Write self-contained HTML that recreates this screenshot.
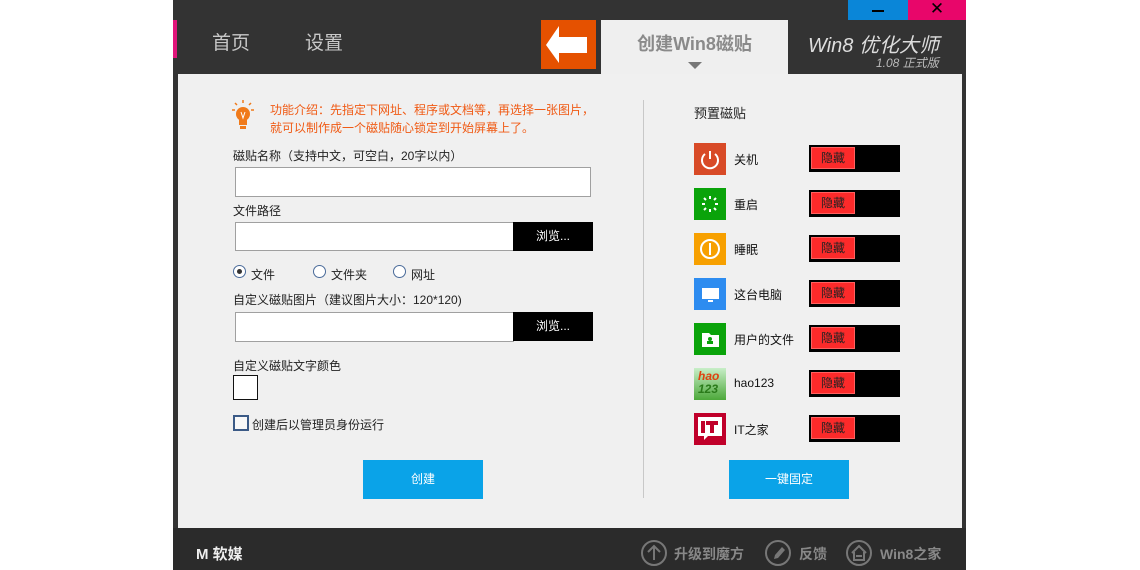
<!DOCTYPE html>
<html><head><meta charset="utf-8"><style>
*{margin:0;padding:0;box-sizing:border-box}
body{width:1140px;height:570px;background:#fff;position:relative;overflow:hidden;font-family:"Liberation Sans","Microsoft YaHei","Noto Sans CJK SC",sans-serif;font-size:12px;color:#222}
.a{position:absolute}
.inp{position:absolute;background:#fff;border:1px solid #a0a0a0}
.br{position:absolute;background:#000;color:#fff;font-size:12px;text-align:center;line-height:29px;width:80px;height:29px}
.rad{position:absolute;width:13px;height:13px;border:1px solid #4a6b9a;border-radius:50%;background:#fff}
.ic{position:absolute;left:694px;width:32px;height:32px}
.lb{position:absolute;left:734px;font-size:12px;color:#111}
.tg{position:absolute;left:809px;width:91px;height:27px;background:#000}
.tg span{position:absolute;left:2px;top:2px;width:44px;height:22px;background:#fc2a2a;border:1px solid #ff6060;color:#222;text-align:center;line-height:20px;font-size:12px}
.btn{position:absolute;background:#0aa3e8;color:#fff;text-align:center;width:120px;height:39px;line-height:39px;top:460px}
</style></head><body>
<div class="a" style="left:173px;top:0;width:793px;height:570px;background:#333"></div>
<div class="a" style="left:173px;top:20px;width:4px;height:38px;background:#e0157a"></div>
<div class="a" style="left:848px;top:0;width:60px;height:20px;background:#0a86d8"><div class="a" style="left:24px;top:10px;width:12px;height:2px;background:#000"></div></div>
<div class="a" style="left:908px;top:0;width:58px;height:20px;background:#e8066a;color:#000;text-align:center;font-size:17px;line-height:18px">✕</div>
<div class="a" style="left:212px;top:28px;font-size:19px;color:#c8c8c8">首页</div>
<div class="a" style="left:305px;top:28px;font-size:19px;color:#c8c8c8">设置</div>
<div class="a" style="left:541px;top:20px;width:55px;height:49px;background:#e55100">
<svg width="55" height="49" viewBox="0 0 55 49"><path d="M5 25 L18 6 L18 17 L46 17 L46 33 L18 33 L18 43 Z" fill="#fff"/></svg></div>
<div class="a" style="left:601px;top:20px;width:187px;height:54px;background:#efefef;text-align:center">
<div style="margin-top:10px;font-size:18px;color:#8a8a8a;font-weight:bold">创建Win8磁贴</div>
<div class="a" style="left:87px;top:42px;width:0;height:0;border-left:7px solid transparent;border-right:7px solid transparent;border-top:7px solid #777"></div></div>
<div class="a" style="left:808px;top:29px;font-size:20px;color:#ddd;font-style:italic">Win8 优化大师</div>
<div class="a" style="left:876px;top:54px;font-size:12px;color:#bbb;font-style:italic">1.08 正式版</div>
<div class="a" style="left:178px;top:74px;width:784px;height:454px;background:#f0f0f0"></div>
<svg class="a" style="left:231px;top:99px" width="24" height="34" viewBox="0 0 24 34"><g stroke="#f07a1a" stroke-width="1.5"><path d="M12 1v3M4 4l2 2M20 4l-2 2M1 11h3M23 11h-3"/></g><circle cx="12" cy="15" r="7" fill="#f07a1a"/><rect x="8" y="20" width="8" height="6" fill="#f07a1a"/><path d="M10 13l2 6 2-6" stroke="#fff" fill="none"/><rect x="9" y="27" width="6" height="3" fill="#f07a1a"/></svg>
<div class="a" style="left:270px;top:101px;color:#f05a14;font-size:12px;line-height:18px">功能介绍：先指定下网址、程序或文档等，再选择一张图片，<br>就可以制作成一个磁贴随心锁定到开始屏幕上了。</div>
<div class="a" style="left:233px;top:147px">磁贴名称（支持中文，可空白，20字以内）</div>
<div class="inp" style="left:235px;top:167px;width:356px;height:30px"></div>
<div class="a" style="left:233px;top:202px">文件路径</div>
<div class="inp" style="left:235px;top:222px;width:279px;height:29px"></div>
<div class="br" style="left:513px;top:222px">浏览...</div>
<div class="rad" style="left:233px;top:265px"><div class="a" style="left:3px;top:3px;width:5px;height:5px;border-radius:50%;background:#333"></div></div>
<div class="a" style="left:251px;top:266px">文件</div>
<div class="rad" style="left:313px;top:265px"></div><div class="a" style="left:331px;top:266px">文件夹</div>
<div class="rad" style="left:393px;top:265px"></div><div class="a" style="left:411px;top:266px">网址</div>
<div class="a" style="left:233px;top:291px">自定义磁贴图片（建议图片大小：120*120)</div>
<div class="inp" style="left:235px;top:312px;width:279px;height:30px"></div>
<div class="br" style="left:513px;top:312px">浏览...</div>
<div class="a" style="left:233px;top:357px">自定义磁贴文字颜色</div>
<div class="a" style="left:233px;top:375px;width:25px;height:25px;background:#fff;border:1px solid #111"></div>
<div class="a" style="left:233px;top:415px;width:16px;height:16px;border:2px solid #3b5a86;background:#f8f8f8"></div>
<div class="a" style="left:252px;top:416px">创建后以管理员身份运行</div>
<div class="btn" style="left:363px">创建</div>
<div class="a" style="left:643px;top:100px;width:1px;height:398px;background:#c8c8c8"></div>
<div class="a" style="left:694px;top:103px;font-size:13px">预置磁贴</div>

<div class="ic" style="top:143px;background:#d84a27"><svg width="32" height="32"><path d="M11 11a8 8 0 1 0 10 0" stroke="#fff" stroke-width="2" fill="none"/><path d="M16 8v8" stroke="#fff" stroke-width="2"/></svg></div>
<div class="ic" style="top:188px;background:#0aa30a"><svg width="32" height="32" stroke="#fff" stroke-width="2"><path d="M16 8v3M16 21v3M8 16h3M21 16h3M10 10l2 2M22 10l-2 2M10 22l2-2M22 22l-2-2"/></svg></div>
<div class="ic" style="top:233px;background:#f7a000"><svg width="32" height="32"><circle cx="16" cy="16" r="9" stroke="#fff" stroke-width="2" fill="none"/><path d="M16 10v12" stroke="#fff" stroke-width="2"/></svg></div>
<div class="ic" style="top:278px;background:#2d8cf0"><svg width="32" height="32"><rect x="8" y="10" width="17" height="11" fill="#fff"/><path d="M14 23h5" stroke="#fff" stroke-width="2"/></svg></div>
<div class="ic" style="top:323px;background:#0aa30a"><svg width="32" height="32"><path d="M8 10h7l2 2h8v12H8z" fill="#fff"/><circle cx="16" cy="16" r="2" fill="#0aa30a"/><rect x="13" y="18" width="6" height="3" fill="#0aa30a"/></svg></div>
<div class="ic" style="top:368px;background:linear-gradient(#c8eec8,#4ca83a)"><div style="font-size:12px;color:#e04010;font-style:italic;font-weight:bold;padding:2px 0 0 4px;line-height:13px">hao<br><span style="color:#2a7a1a">123</span></div></div>
<div class="ic" style="top:413px;background:#c0002a"><svg width="32" height="32"><path d="M4 4h24v19H14l-4 4v-4H4z" fill="#fff"/><path d="M7 8h4v12H7zM12 8h12v4h-4v8h-4v-8h-4z" fill="#c0002a"/></svg></div>

<div class="lb" style="top:151px">关机</div><div class="tg" style="top:145px"><span>隐藏</span></div>
<div class="lb" style="top:196px">重启</div><div class="tg" style="top:190px"><span>隐藏</span></div>
<div class="lb" style="top:241px">睡眠</div><div class="tg" style="top:235px"><span>隐藏</span></div>
<div class="lb" style="top:286px">这台电脑</div><div class="tg" style="top:280px"><span>隐藏</span></div>
<div class="lb" style="top:331px">用户的文件</div><div class="tg" style="top:325px"><span>隐藏</span></div>
<div class="lb" style="top:376px">hao123</div><div class="tg" style="top:370px"><span>隐藏</span></div>
<div class="lb" style="top:421px">IT之家</div><div class="tg" style="top:415px"><span>隐藏</span></div>
<div class="btn" style="left:729px">一键固定</div>

<div class="a" style="left:173px;top:528px;width:793px;height:42px;background:#2b2b2b"></div>
<div class="a" style="left:196px;top:543px;color:#eee;font-size:15px;font-weight:bold">M 软媒</div>
<svg class="a" style="left:640px;top:539px" width="28" height="28"><circle cx="14" cy="14" r="12" stroke="#777" stroke-width="2" fill="none"/><path d="M14 21V8M8 13l6-6 6 6" stroke="#777" stroke-width="2" fill="none"/></svg>
<div class="a" style="left:674px;top:544px;color:#888;font-size:14px;font-weight:bold">升级到魔方</div>
<svg class="a" style="left:764px;top:539px" width="28" height="28"><circle cx="14" cy="14" r="12" stroke="#777" stroke-width="2" fill="none"/><path d="M10 20l1-4 7-8 3 3-7 8z" fill="#777"/></svg>
<div class="a" style="left:799px;top:544px;color:#888;font-size:14px;font-weight:bold">反馈</div>
<svg class="a" style="left:845px;top:539px" width="28" height="28"><circle cx="14" cy="14" r="12" stroke="#777" stroke-width="2" fill="none"/><path d="M7 14l7-7 7 7M9 13v8h10v-8M11 17h6" stroke="#777" stroke-width="2" fill="none"/></svg>
<div class="a" style="left:880px;top:544px;color:#888;font-size:14px;font-weight:bold">Win8之家</div>
</body></html>
